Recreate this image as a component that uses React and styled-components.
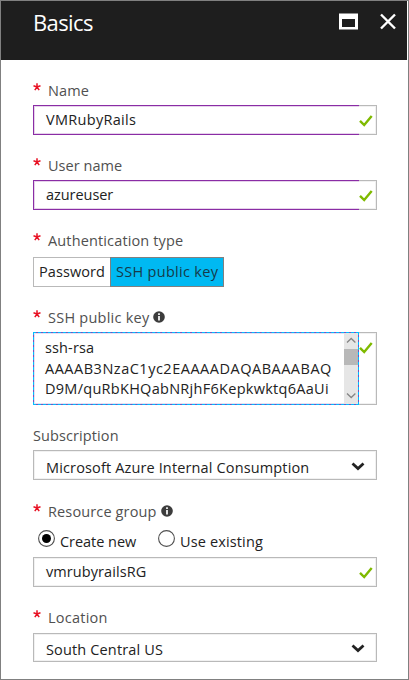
import React from 'react';
import styled, { createGlobalStyle } from 'styled-components';

const GlobalStyle = createGlobalStyle`
  * { box-sizing: border-box; }
  body { margin: 0; background: #fff; }
`;

const Blade = styled.main`
  width: 409px;
  height: 680px;
  overflow: hidden;
  border: 1px solid #808080;
  background: #fff;
  color: #222;
  font: 14.5px/20px "Open Sans", "Noto Sans", sans-serif;
`;

const Header = styled.header`
  display: flex;
  align-items: flex-start;
  height: 59px;
  margin-right: 1px;
  padding-left: 32px;
  background: #1e1e1e;
  color: #fff;
`;

const Title = styled.h1`
  flex: 1;
  margin: 6px 0 0;
  font-size: 22px;
  line-height: 30px;
  font-weight: 400;
  letter-spacing: -0.6px;
`;

const HeaderIcon = styled.svg`
  flex: none;
  margin: ${(p) => p.$margin};
`;

const Form = styled.form`
  width: 344px;
  margin: 20px 0 0 32px;
`;

const Field = styled.section`
  margin-bottom: ${(p) => p.$gap || 20}px;
`;

const Label = styled.div`
  display: flex;
  height: ${(p) => p.$height || 25}px;
  padding-top: 1px;
  color: #505050;
  white-space: nowrap;
`;

const Required = styled.svg`
  flex: none;
  width: 8px;
  height: 8px;
  margin: 2px 7px 0 0;
`;

const Text = styled.span`
  letter-spacing: ${(p) => p.$spacing || 0}px;
  white-space: nowrap;
`;

const InfoSvg = styled.svg`
  flex: none;
  margin: 3px 0 0 4px;
`;

const Box = styled.div`
  display: flex;
  height: ${(p) => p.$height || 30}px;
  border: 1px solid #b9b9b9;
  box-shadow: inset 0 0 0 1px #f1f1f1;
`;

const Input = styled.div`
  flex: none;
  width: 326px;
  margin: -1px;
  padding: 4px 0 0 12px;
  border: 1px solid ${(p) => (p.$edited ? '#8a2da5' : '#b9b9b9')};
  border-right: 0;
  box-shadow: inset 1px 0 0 ${(p) => (p.$edited ? '#e6d2eb' : '#f1f1f1')},
    inset 0 1px 0 ${(p) => (p.$edited ? '#e6d2eb' : '#f1f1f1')},
    inset 0 -1px 0 ${(p) => (p.$edited ? '#e6d2eb' : '#f1f1f1')};
`;

const CheckSvg = styled.svg`
  flex: none;
  margin: 9px 0 0 1px;
`;

const Segments = styled.div`
  display: flex;
  height: 30px;
`;

const Segment = styled.div`
  width: ${(p) => p.$width}px;
  padding: 4px 0 0 ${(p) => p.$pad}px;
  border: 1px solid ${(p) => (p.$active ? '#808080' : '#b9b9b9')};
  border-right-width: ${(p) => (p.$active ? 1 : 0)}px;
  background: ${(p) => (p.$active ? '#00b9f2' : '#fff')};
  color: ${(p) => (p.$active ? '#16394a' : '#222')};
`;

const TextArea = styled.div`
  display: flex;
  flex: none;
  justify-content: space-between;
  width: 326px;
  margin: -1px;
  overflow: hidden;
  border: 1px solid #7a4fc0;
  outline: 1px dashed #00bfff;
  outline-offset: -1px;
  background: #fff;
  box-shadow: inset 0 0 0 1px #e6e1f2;
`;

const KeyLines = styled.div`
  padding: 5px 0 0 11px;
  line-height: 20.5px;
`;

const KeyLine = styled.div`
  letter-spacing: ${(p) => p.$spacing}px;
  white-space: nowrap;
`;

const Scrollbar = styled.div`
  display: flex;
  flex-direction: column;
  width: 14px;
  height: 71px;
  background: #e6e6e6;
`;

const Thumb = styled.div`
  height: 16px;
  background: #b8b8b8;
`;

const Select = styled(Box)`
  justify-content: space-between;
  padding: ${(p) => p.$pad}px 11px 0 12px;
`;

const Chevron = styled.svg`
  flex: none;
  margin-top: ${(p) => p.$top}px;
`;

const Radios = styled.div`
  display: flex;
  height: 31px;
  padding-left: 5px;
`;

const RadioOption = styled.label`
  display: flex;
  width: 120px;
  gap: 5px;
  white-space: nowrap;
`;

const RadioSvg = styled.svg`
  flex: none;
  margin-top: 4px;
`;

const RadioText = styled(Text)`
  padding-top: 6px;
`;

const Star = () => (
  <Required viewBox="0 0 8 8" fill="none" stroke="#e81123" strokeWidth="1.5">
    <path d="M4 .2V4M.5 2.8 4 4l3.5-1.2M1.8 7.2 4 4l2.2 3.2" />
  </Required>
);

const Info = () => (
  <InfoSvg width="12" height="12" viewBox="0 0 12 12">
    <circle cx="6" cy="6" r="5.8" fill="#3c3c3c" />
    <path d="M6 2.2v1.7M6 5v4.5" stroke="#fff" strokeWidth="1.7" />
  </InfoSvg>
);

const Check = () => (
  <CheckSvg width="14" height="12" viewBox="0 0 14 12" fill="none" stroke="#7fba00" strokeWidth="2.4">
    <path d="M1 5.8 5.2 10 12.7 1" />
  </CheckSvg>
);

const Down = ({ top }) => (
  <Chevron $top={top} width="14" height="9" viewBox="0 0 14 9" fill="none" stroke="#222" strokeWidth="2.8">
    <path d="M1.5 1.5 7 6.5l5.5-5" />
  </Chevron>
);

const Radio = ({ checked, spacing, children }) => (
  <RadioOption>
    <RadioSvg width="17" height="17" viewBox="0 0 17 17">
      <circle cx="8.5" cy="8.5" r="7.9" fill="#fff" stroke="#505050" strokeWidth="1.1" />
      {checked && <circle cx="8.5" cy="8.5" r="4.5" fill="#000" />}
    </RadioSvg>
    <RadioText $spacing={spacing}>{children}</RadioText>
  </RadioOption>
);

const FieldLabel = ({ required = true, info, spacing, height, children }) => (
  <Label $height={height}>
    {required && <Star />}
    <Text $spacing={spacing}>{children}</Text>
    {info && <Info />}
  </Label>
);

const TextInput = ({ edited, spacing, children }) => (
  <Box>
    <Input $edited={edited}><Text $spacing={spacing}>{children}</Text></Input>
    <Check />
  </Box>
);

export default function App() {
  return (
    <>
      <GlobalStyle />
      <Blade>
        <Header>
          <Title>Basics</Title>
          <HeaderIcon $margin="12px 22px 0 0" width="19" height="17" viewBox="0 0 19 17">
            <path fill="#fff" fillRule="evenodd" d="M0 .4h19v16.2H0zM3 6v8h13V6z" />
          </HeaderIcon>
          <HeaderIcon $margin="12px 11px 0 0" width="16" height="17" viewBox="0 0 16 17" fill="none" stroke="#fff" strokeWidth="2.4">
            <path d="m1 1.5 14 14m0-14-14 14" />
          </HeaderIcon>
        </Header>
        <Form>
          <Field>
            <FieldLabel spacing={0.1}>Name</FieldLabel>
            <TextInput edited spacing={0.3}>VMRubyRails</TextInput>
          </Field>
          <Field>
            <FieldLabel spacing={0.04}>User name</FieldLabel>
            <TextInput edited spacing={-0.05}>azureuser</TextInput>
          </Field>
          <Field>
            <FieldLabel spacing={0.14} height={27}>Authentication type</FieldLabel>
            <Segments>
              <Segment $width={77} $pad={5}><Text $spacing={0.07}>Password</Text></Segment>
              <Segment $active $width={114} $pad={5}><Text $spacing={0.3}>SSH public key</Text></Segment>
            </Segments>
          </Field>
          <Field>
            <FieldLabel spacing={0.24} info>SSH public key</FieldLabel>
            <Box $height={73}>
              <TextArea>
                <KeyLines>
                  <KeyLine $spacing={0.13}>ssh-rsa</KeyLine>
                  <KeyLine $spacing={0.51}>AAAAB3NzaC1yc2EAAAADAQABAAABAQ</KeyLine>
                  <KeyLine $spacing={0.28}>D9M/quRbKHQabNRjhF6Kepkwktq6AaUi</KeyLine>
                </KeyLines>
                <Scrollbar>
                  <svg width="14" height="16" fill="none" stroke="#858585" strokeWidth="1.3"><path d="m3 9.5 4.2-4 4.2 4" /></svg>
                  <Thumb />
                  <svg width="14" height="39" fill="none" stroke="#858585" strokeWidth="1.3"><path d="m3 28.5 4.2 4 4.2-4" /></svg>
                </Scrollbar>
              </TextArea>
              <Check />
            </Box>
          </Field>
          <Field $gap={21}>
            <FieldLabel required={false} spacing={0.1}>Subscription</FieldLabel>
            <Select $pad={7}><Text $spacing={0.14}>Microsoft Azure Internal Consumption</Text><Down top={4} /></Select>
          </Field>
          <Field>
            <FieldLabel spacing={0.13} info>Resource group</FieldLabel>
            <Radios>
              <Radio checked spacing={-0.04}>Create new</Radio>
              <Radio spacing={0.14}>Use existing</Radio>
            </Radios>
            <TextInput spacing={0.08}>vmrubyrailsRG</TextInput>
          </Field>
          <Field>
            <FieldLabel spacing={0.25} height={26}>Location</FieldLabel>
            <Select $height={29} $pad={6}><Text $spacing={0.15}>South Central US</Text><Down top={4} /></Select>
          </Field>
        </Form>
      </Blade>
    </>
  );
}
